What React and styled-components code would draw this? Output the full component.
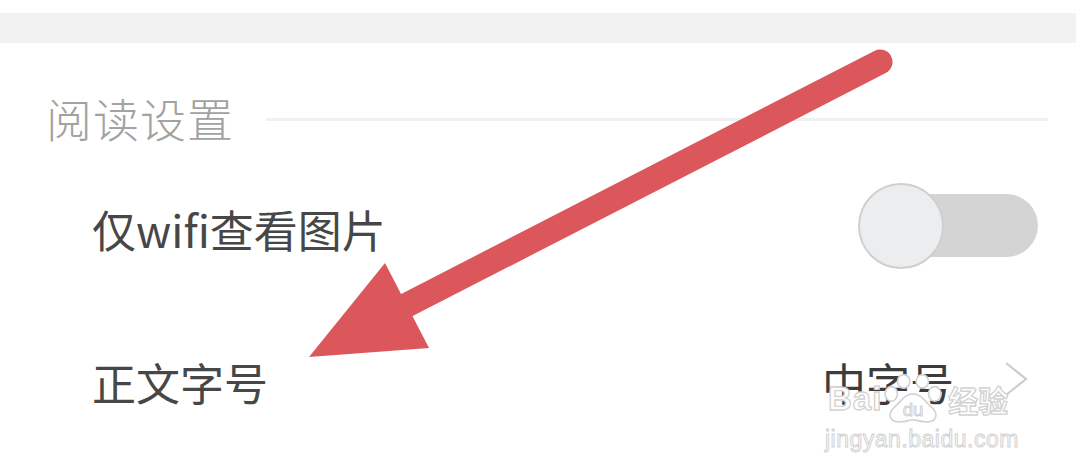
import React from 'react';
import styled, { createGlobalStyle } from 'styled-components';

const GlobalStyle = createGlobalStyle`
  html, body {
    margin: 0;
    padding: 0;
    background: #ffffff;
  }
  body {
    font-family: "Noto Sans CJK SC", "Noto Sans", sans-serif;
  }
`;

const Page = styled.div`
  position: relative;
  width: 1076px;
  height: 476px;
  overflow: hidden;
  background: #ffffff;
  padding-top: 13px;
  box-sizing: border-box;
`;

const TopBand = styled.div`
  height: 30px;
  background: #f2f2f2;
`;

const SectionHeader = styled.div`
  display: flex;
  align-items: center;
  height: 100px;
  margin-top: 24px;
  padding-left: 46px;
  padding-right: 28px;
`;

const SectionTitle = styled.span`
  font-size: 46px;
  line-height: 1;
  color: #a2a2a2;
  font-weight: 300;
  letter-spacing: 1px;
`;

const SectionRule = styled.div`
  flex: 1;
  height: 3px;
  margin-left: 32px;
  margin-top: 4px;
  background: #f0f0f0;
`;

const Row = styled.div`
  display: flex;
  align-items: center;
  justify-content: space-between;
  height: ${(p) => p.h}px;
  margin-top: ${(p) => p.mt || 0}px;
  padding-left: 92px;
  padding-right: ${(p) => p.pr}px;
`;

const Label = styled.span`
  font-size: 44px;
  line-height: 1;
  color: #474747;
`;

const Value = styled.div`
  display: flex;
  align-items: center;
  gap: 50px;
  font-size: 44px;
  line-height: 1;
  color: #3c3c3c;
`;

const Toggle = styled.div`
  position: relative;
  display: flex;
  align-items: center;
  width: 180px;
  height: 86px;
  margin-top: -6px;
`;

const Track = styled.div`
  width: 166px;
  height: 63px;
  margin-left: 14px;
  border-radius: 32px;
  background: #d4d4d4;
`;

const Knob = styled.div`
  position: absolute;
  left: 0;
  top: 0;
  width: 82px;
  height: 82px;
  border-radius: 50%;
  background: #ecedef;
  border: 2px solid #cfcfcf;
`;

const Chevron = styled.svg`
  width: 24px;
  height: 36px;
  margin-top: -6px;
`;

/* site watermark laid over the lower right corner */
const Watermark = styled.div`
  position: absolute;
  left: 828px;
  top: 374px;
  width: 200px;
  pointer-events: none;
`;

const MarkTop = styled.div`
  display: flex;
  align-items: center;
  height: 50px;
`;

const MarkWord = styled.span`
  font-family: "Liberation Sans", Arial, sans-serif;
  font-size: 33px;
  font-weight: bold;
  color: #ffffff;
  -webkit-text-stroke: 1.3px #d2d2d2;
  letter-spacing: 1px;
`;

const MarkCjk = styled.span`
  font-family: "Noto Sans CJK SC", sans-serif;
  font-size: 30px;
  font-weight: bold;
  color: #ffffff;
  -webkit-text-stroke: 1.3px #d2d2d2;
  margin-left: 4px;
`;

const MarkUrl = styled.div`
  font-family: "Liberation Sans", Arial, sans-serif;
  font-size: 23px;
  color: #ffffff;
  -webkit-text-stroke: 1px #d2d2d2;
  margin-top: 2px;
  margin-left: -3px;
  letter-spacing: 0.5px;
`;

const Arrow = styled.svg`
  position: absolute;
  left: 0;
  top: 0;
  width: 1076px;
  height: 476px;
  pointer-events: none;
`;

const Paw = () => (
  <svg width="58" height="50" viewBox="0 0 56 48" style={{ margin: '0 2px' }}>
    <g fill="#ffffff" stroke="#d2d2d2" strokeWidth="1.6">
      <ellipse cx="7" cy="19" rx="6" ry="7" />
      <ellipse cx="19" cy="7" rx="6" ry="6.5" />
      <ellipse cx="37" cy="7" rx="6" ry="6.5" />
      <ellipse cx="49" cy="19" rx="6" ry="7" />
      <path d="M28 19 C20 19 16 27 10 32 C3 38 5 47 16 46 C22 46 24 44 28 44 C32 44 34 46 40 46 C51 47 53 38 46 32 C40 27 36 19 28 19 Z" />
    </g>
    <text
      x="28"
      y="40"
      textAnchor="middle"
      fontFamily="Liberation Sans, Arial, sans-serif"
      fontSize="18"
      fill="#ffffff"
      stroke="#d2d2d2"
      strokeWidth="1"
    >
      du
    </text>
  </svg>
);

export default function App() {
  return (
    <>
      <GlobalStyle />
      <Page>
        <TopBand />
        <SectionHeader>
          <SectionTitle>阅读设置</SectionTitle>
          <SectionRule />
        </SectionHeader>

        <Row h={123} pr={38}>
          <Label>仅wifi查看图片</Label>
          <Toggle>
            <Track />
            <Knob />
          </Toggle>
        </Row>

        <Row h={78} mt={53} pr={48}>
          <Label>正文字号</Label>
          <Value>
            中字号
            <Chevron viewBox="0 0 24 36">
              <polyline points="2,2 22,18 2,34" fill="none" stroke="#cccccc" strokeWidth="2.2" />
            </Chevron>
          </Value>
        </Row>

        <Watermark>
          <MarkTop>
            <MarkWord>Bai</MarkWord>
            <Paw />
            <MarkCjk>经验</MarkCjk>
          </MarkTop>
          <MarkUrl>jingyan.baidu.com</MarkUrl>
        </Watermark>

        <Arrow viewBox="0 0 1076 476">
          <line x1="880" y1="62" x2="405" y2="306" stroke="#dc575c" strokeWidth="25" strokeLinecap="round" />
          <polygon points="385,263 429,348 309,357" fill="#dc575c" />
        </Arrow>
      </Page>
    </>
  );
}
